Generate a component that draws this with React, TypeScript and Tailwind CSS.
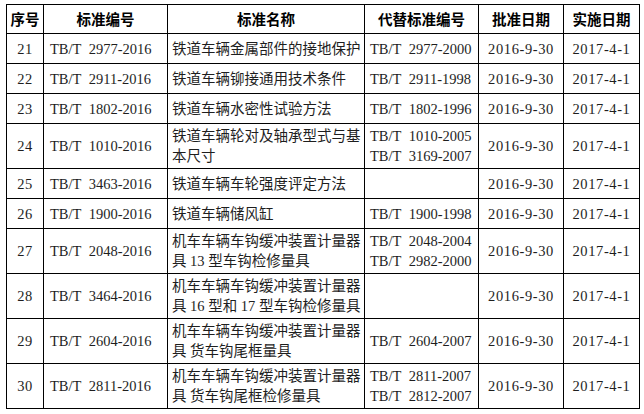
import React from 'react'

type Row = {
  no: string
  code: string
  name: string[]
  old: string[]
  tall?: boolean
}

const rows: Row[] = [
  { no: '21', code: 'TB/T 2977-2016', name: ['铁道车辆金属部件的接地保护'], old: ['TB/T 2977-2000'] },
  { no: '22', code: 'TB/T 2911-2016', name: ['铁道车辆铆接通用技术条件'], old: ['TB/T 2911-1998'] },
  { no: '23', code: 'TB/T 1802-2016', name: ['铁道车辆水密性试验方法'], old: ['TB/T 1802-1996'] },
  { no: '24', code: 'TB/T 1010-2016', name: ['铁道车辆轮对及轴承型式与基', '本尺寸'], old: ['TB/T 1010-2005', 'TB/T 3169-2007'], tall: true },
  { no: '25', code: 'TB/T 3463-2016', name: ['铁道车辆车轮强度评定方法'], old: [] },
  { no: '26', code: 'TB/T 1900-2016', name: ['铁道车辆储风缸'], old: ['TB/T 1900-1998'] },
  { no: '27', code: 'TB/T 2048-2016', name: ['机车车辆车钩缓冲装置计量器', '具 13 型车钩检修量具'], old: ['TB/T 2048-2004', 'TB/T 2982-2000'], tall: true },
  { no: '28', code: 'TB/T 3464-2016', name: ['机车车辆车钩缓冲装置计量器', '具 16 型和 17 型车钩检修量具'], old: [], tall: true },
  { no: '29', code: 'TB/T 2604-2016', name: ['机车车辆车钩缓冲装置计量器', '具 货车钩尾框量具'], old: ['TB/T 2604-2007'], tall: true },
  { no: '30', code: 'TB/T 2811-2016', name: ['机车车辆车钩缓冲装置计量器', '具 货车钩尾框检修量具'], old: ['TB/T 2811-2007', 'TB/T 2812-2007'], tall: true },
]

// SimSun-style half-width space in the standard codes
const wide = (s: string) => s.replace(/ /g, '\u2002')

const cell = 'border border-black px-0 align-middle'

export default function App() {
  return (
    <div className="min-h-[414px] w-[644px] bg-white pl-[6px] pt-[4px]">
      <table
        className="table-fixed border-collapse text-[14.5px] leading-[20px] text-[#1e1e1e] [font-family:'Liberation_Serif','Noto_Sans_CJK_SC',serif]"
        style={{ width: 633 }}
      >
        <colgroup>
          <col className="w-[37px]" />
          <col className="w-[124px]" />
          <col className="w-[197px]" />
          <col className="w-[114px]" />
          <col className="w-[85px]" />
          <col className="w-[76px]" />
        </colgroup>
        <thead>
          <tr className="h-[29px] font-bold text-black [font-family:'Noto_Sans_CJK_SC',sans-serif]">
            <th className={`${cell} text-center`}>序号</th>
            <th className={`${cell} text-center`}>标准编号</th>
            <th className={`${cell} text-center`}>标准名称</th>
            <th className={`${cell} text-center`}>代替标准编号</th>
            <th className={`${cell} text-center`}>批准日期</th>
            <th className={`${cell} text-center`}>实施日期</th>
          </tr>
        </thead>
        <tbody>
          {rows.map((r) => (
            <tr key={r.no} className={r.tall ? 'h-[45px]' : 'h-[30px]'}>
              <td className={`${cell} tracking-[0.5px] text-center`}>{r.no}</td>
              <td className={`${cell} whitespace-nowrap pl-[6px]`}>{wide(r.code)}</td>
              <td className={`${cell} whitespace-nowrap pl-[4px]`}>
                {r.name.map((n, i) => (
                  <div key={i}>{n}</div>
                ))}
              </td>
              <td className={`${cell} whitespace-nowrap pl-[5px]`}>
                {r.old.map((o, i) => (
                  <div key={i}>{wide(o)}</div>
                ))}
              </td>
              <td className={`${cell} tracking-[0.6px] text-center`}>2016-9-30</td>
              <td className={`${cell} tracking-[0.6px] text-center`}>2017-4-1</td>
            </tr>
          ))}
        </tbody>
      </table>
    </div>
  )
}
